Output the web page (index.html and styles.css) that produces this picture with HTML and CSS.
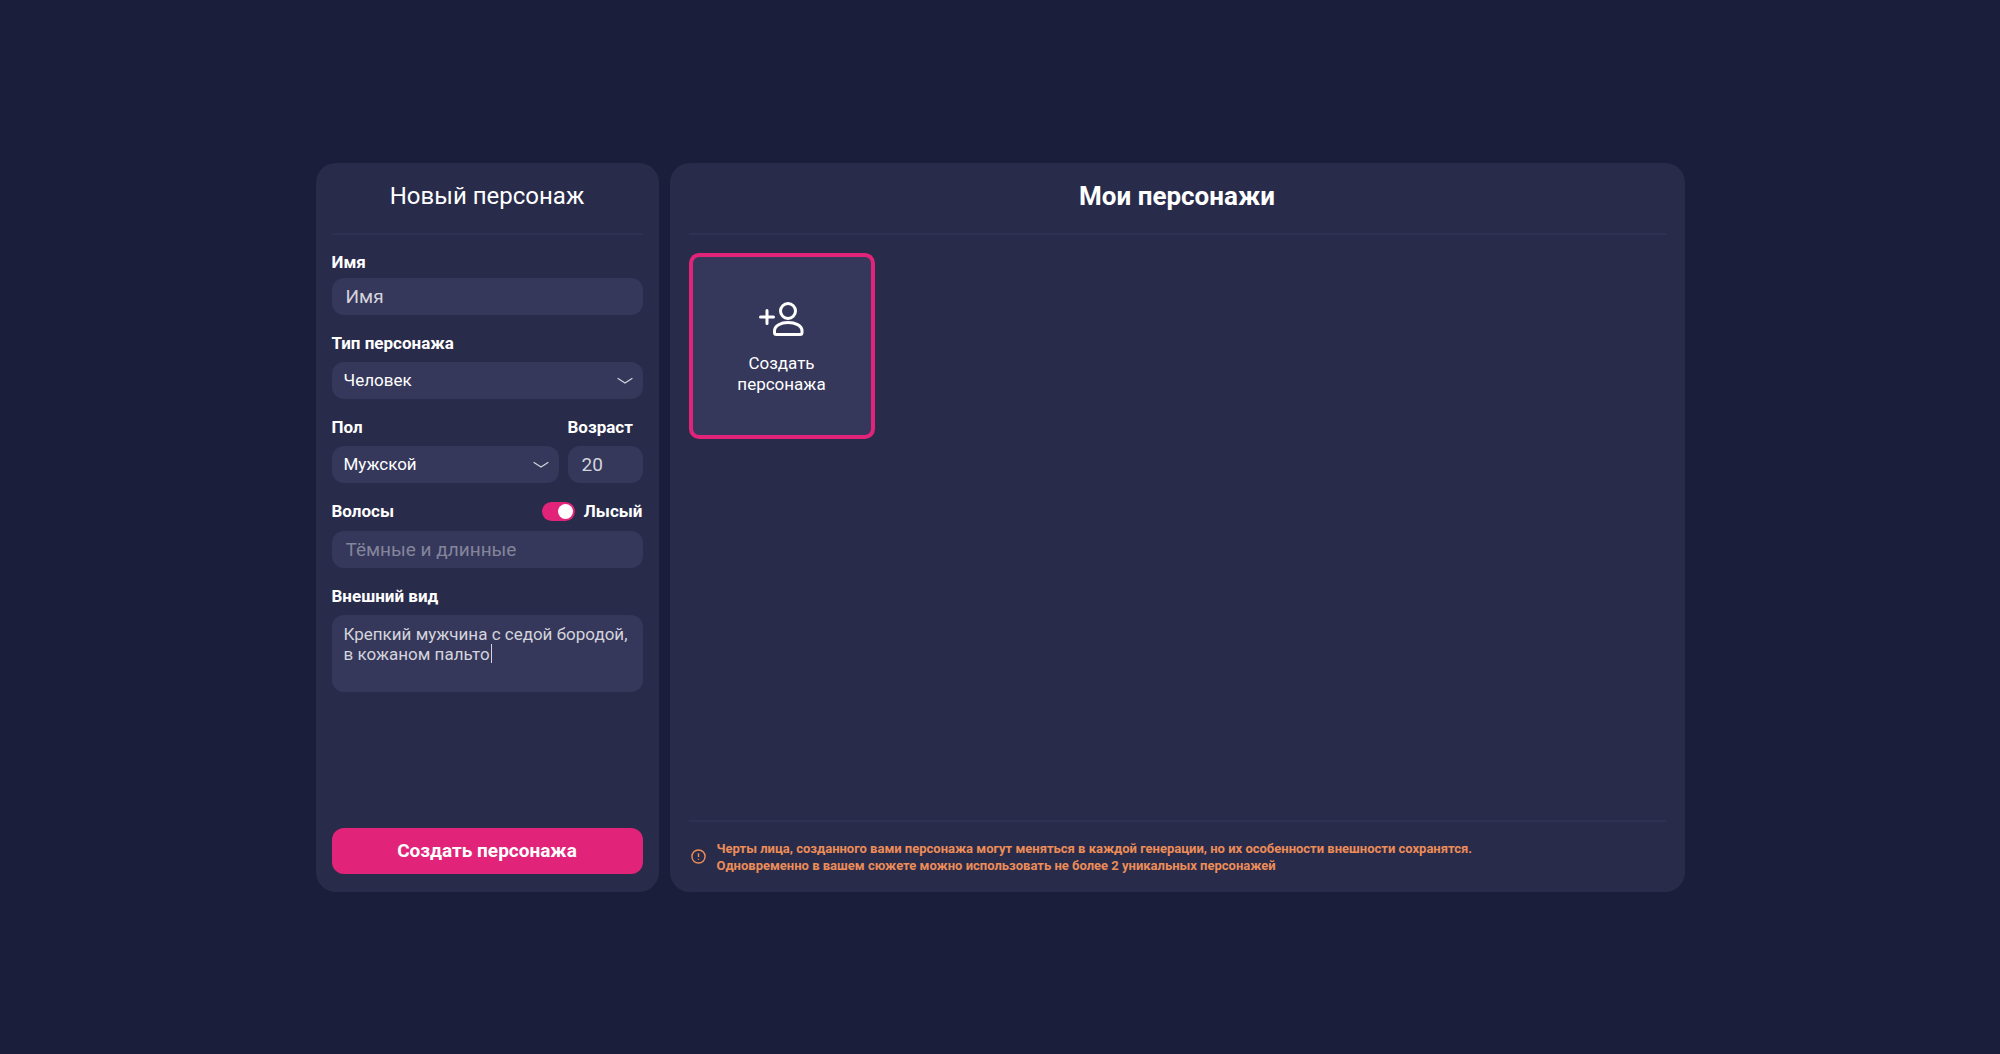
FILE: index.html
```html
<!DOCTYPE html>
<html lang="ru">
<head>
  <meta charset="utf-8">
  <meta name="viewport" content="width=device-width, initial-scale=1">
  <title>Мои персонажи</title>
  <link rel="stylesheet" href="styles.css">
</head>
<body>
  <main class="layout">
    <form class="panel form">
      <h2 class="title title-light">Новый персонаж</h2>

      <div class="field field-tight">
        <label class="label" for="name">Имя</label>
        <input class="control control-text" id="name" type="text" value="Имя">
      </div>

      <div class="field">
        <label class="label" for="kind">Тип персонажа</label>
        <div class="select">
          <select class="control control-select" id="kind">
            <option>Человек</option>
          </select>
          <svg class="chevron" viewBox="0 0 16 8" aria-hidden="true"><path d="M1 1.5 L8 6 L15 1.5"/></svg>
        </div>
      </div>

      <div class="row">
        <div class="field">
          <label class="label" for="gender">Пол</label>
          <div class="select">
            <select class="control control-select" id="gender">
              <option>Мужской</option>
            </select>
            <svg class="chevron" viewBox="0 0 16 8" aria-hidden="true"><path d="M1 1.5 L8 6 L15 1.5"/></svg>
          </div>
        </div>
        <div class="field">
          <label class="label" for="age">Возраст</label>
          <input class="control control-text" id="age" type="text" inputmode="numeric" value="20">
        </div>
      </div>

      <div class="field">
        <div class="label-row">
          <label class="label" for="hair">Волосы</label>
          <label class="label switch-label"><input class="switch" type="checkbox" checked>Лысый</label>
        </div>
        <input class="control control-text" id="hair" type="text" placeholder="Тёмные и длинные">
      </div>

      <div class="field">
        <label class="label" for="look">Внешний вид</label>
        <div class="area">
          <textarea class="control control-area" id="look">Крепкий мужчина с седой бородой,
в кожаном пальто</textarea>
          <span class="caret"></span>
        </div>
      </div>

      <button class="submit" type="button">Создать персонажа</button>
    </form>

    <section class="panel gallery">
      <h1 class="title title-bold">Мои персонажи</h1>
      <div class="cards">
        <button class="card" type="button">
          <svg class="card-icon" viewBox="1 0 46 36" aria-hidden="true">
            <path d="M2.5 16H15.500M9 9.500V22.500"/>
            <circle cx="30" cy="10" r="7.500"/>
            <path d="M16.500 30C16.500 24.500 23 21.500 30 21.500S44 24.500 44 30V31.500Q44 33.500 42 33.500H18.500Q16.500 33.500 16.500 31.500Z"/>
          </svg>
          <span class="card-text">Создать персонажа</span>
        </button>
      </div>
      <footer class="notice">
        <svg class="notice-icon" viewBox="0 0 16 16" aria-hidden="true">
          <circle cx="8" cy="8" r="7"/>
          <path d="M8 4.500V8.500M8 10.500V11.500"/>
        </svg>
        <p class="notice-text">Черты лица, созданного вами персонажа могут меняться в каждой генерации, но их особенности внешности сохранятся.<br>Одновременно в вашем сюжете можно использовать не более 2 уникальных персонажей</p>
      </footer>
    </section>
  </main>
</body>
</html>
```
FILE: styles.css
```css
* {
  box-sizing: border-box;
}

body {
  margin: 0;
  min-height: 100vh;
  display: flex;
  align-items: center;
  justify-content: center;
  background: #1b1e3a;
  color: #fff;
  font-family: Roboto, "Noto Sans", sans-serif;
}

.layout {
  flex: 1;
  max-width: 1369px;
  min-height: 729px;
  display: grid;
  grid-template-columns: 343px minmax(0, 1fr);
  gap: 11px;
}

.panel {
  display: flex;
  flex-direction: column;
  border-radius: 20px;
  background: #292b4b;
}

.form {
  padding: 0 16px 18px;
}

.gallery {
  padding: 0 19px 18px;
}

.title {
  margin: 0 0 18px;
  padding: 18px 0 22px;
  border-bottom: 2px solid #2f3153;
  font-size: 24px;
  line-height: 30px;
  text-align: center;
}

.title-light {
  font-weight: 400;
}

.title-bold {
  font-size: 26px;
  font-weight: 700;
}

.field {
  display: flex;
  flex-direction: column;
  gap: 10px;
  margin-bottom: 19px;
}

.field-tight {
  gap: 7px;
}

.row {
  display: grid;
  grid-template-columns: minmax(0, 1fr) 75px;
  gap: 9px;
}

.label-row {
  display: flex;
  justify-content: space-between;
}

.label {
  font-size: 17px;
  font-weight: 700;
  line-height: 18px;
}

.control {
  display: block;
  width: 100%;
  height: 37px;
  margin: 0;
  border: 0;
  border-radius: 12px;
  outline: 0;
  background: #36385b;
  color: #fff;
  font-family: inherit;
  font-size: 17px;
}

.control-text {
  padding: 0 14px;
  color: #d4d4dc;
  font-size: 19px;
}

.control-text::placeholder {
  color: #84859b;
  opacity: 1;
}

.select,
.area {
  position: relative;
}

.control-select {
  padding: 0 36px 0 12px;
  appearance: none;
}

.chevron {
  position: absolute;
  top: 15px;
  right: 10px;
  width: 16px;
  height: 8px;
  fill: none;
  stroke: #d4d4dc;
  stroke-width: 1.2;
  stroke-linecap: round;
  pointer-events: none;
}

.control-area {
  height: 77px;
  padding: 9px 8px 9px 12px;
  color: #d4d4dc;
  line-height: 20px;
  resize: none;
}

.caret {
  position: absolute;
  top: 29px;
  left: 159px;
  width: 1px;
  height: 19px;
  background: #d4d4dc;
}

.switch-label {
  display: flex;
  align-items: center;
  gap: 9px;
}

.switch {
  width: 33px;
  height: 19px;
  margin: 0;
  padding: 2px;
  display: flex;
  justify-content: flex-end;
  appearance: none;
  border-radius: 10px;
  background: #e1237a;
}

.switch::before {
  content: "";
  width: 15px;
  height: 15px;
  border-radius: 50%;
  background: #fff;
}

.submit {
  height: 46px;
  margin-top: auto;
  border: 0;
  border-radius: 12px;
  background: #e1237a;
  color: #fff;
  font-family: inherit;
  font-size: 19px;
  font-weight: 700;
}

.cards {
  flex: 1;
  display: flex;
  flex-wrap: wrap;
  align-items: flex-start;
}

.card {
  width: 186px;
  height: 186px;
  padding: 4px 24px 0;
  display: flex;
  flex-direction: column;
  align-items: center;
  justify-content: center;
  gap: 16px;
  border: 4px solid #e1237a;
  border-radius: 10px;
  background: #36385b;
  color: #fff;
  font-family: inherit;
  font-size: 17px;
  line-height: 21px;
}

.card-icon {
  width: 46px;
  height: 36px;
  fill: none;
  stroke: #fff;
  stroke-width: 3;
  stroke-linecap: round;
}

.notice {
  display: flex;
  align-items: center;
  gap: 11px;
  padding: 18px 2px 0;
  border-top: 2px solid #2f3153;
}

.notice-icon {
  width: 15px;
  height: 15px;
  fill: none;
  stroke: #ec8d58;
  stroke-width: 1.5;
}

.notice-text {
  margin: 0;
  color: #ec8d58;
  font-size: 13px;
  font-weight: 700;
  line-height: 17px;
}
```
